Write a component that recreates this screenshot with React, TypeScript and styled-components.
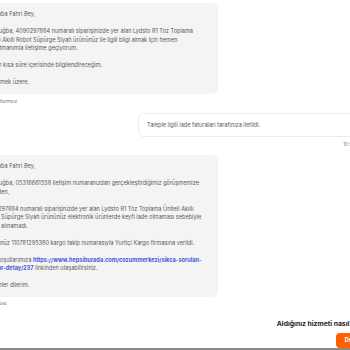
import React from "react";
import styled, { createGlobalStyle } from "styled-components";

const Global = createGlobalStyle`
  html, body { margin: 0; padding: 0; background: #fff; }
  body { width: 350px; height: 350px; overflow: hidden; font-family: Inter, "Noto Sans", sans-serif; }
`;

const Viewport = styled.div`
  width: 350px;
  height: 350px;
  overflow: hidden;
  border-bottom: 2px solid #8a8a8a;
  box-sizing: border-box;
`;

const Thread = styled.div`
  width: 386px;
  margin-left: -26px;
  padding-top: 3px;
  display: flex;
  flex-direction: column;
`;

const AgentBubble = styled.div<{ $mt?: number }>`
  width: 244px;
  box-sizing: border-box;
  margin-top: ${(p) => p.$mt ?? 0}px;
  background: #f4f4f4;
  border-radius: 6px;
  padding: 7px 10px;
  color: #5a5a5a;
  font-size: 5.6px;
  line-height: 8.5px;
`;

const Para = styled.p`
  margin: 0;
  & + & { margin-top: 8.5px; }
`;

const Link = styled.a`
  color: #4b57d8;
  font-weight: 700;
  text-decoration: none;
`;

const Meta = styled.div<{ $mt: number; $right?: boolean; $pl?: number }>`
  margin-top: ${(p) => p.$mt}px;
  font-size: 4.6px;
  line-height: 8px;
  color: #777;
  white-space: nowrap;
  align-self: ${(p) => (p.$right ? "flex-end" : "flex-start")};
  padding-left: ${(p) => (p.$right ? 0 : p.$pl ?? 10)}px;
  padding-right: ${(p) => (p.$right ? 5 : 0)}px;
`;

const UserBubble = styled.div`
  align-self: flex-end;
  margin-top: 7px;
  width: 222px;
  box-sizing: border-box;
  background: #fff;
  border: 1px solid #ececec;
  border-radius: 6px;
  padding: 7px 8px;
  color: #5a5a5a;
  font-size: 5.6px;
  line-height: 8.5px;
`;

const Rating = styled.div`
  align-self: flex-end;
  margin-top: 11px;
  display: flex;
  flex-direction: column;
  align-items: flex-start;
  margin-right: -26px;
`;

const RatingTitle = styled.div`
  font-size: 6.8px;
  line-height: 10px;
  font-weight: 700;
  color: #222;
  white-space: nowrap;
`;

const RateButton = styled.button`
  margin-top: 4px;
  margin-left: 59px;
  height: 15px;
  padding: 0 9px;
  border: none;
  border-radius: 4px;
  background: #ff6000;
  color: #fff;
  font-family: inherit;
  font-size: 5.6px;
  font-weight: 700;
`;

export default function App() {
  return (
    <>
      <Global />
      <Viewport>
        <Thread>
          <AgentBubble>
            <Para>Merhaba Fahri Bey,</Para>
            <Para>
              Ben Tuğba, 4090297884 numaralı siparişinizde yer alan Lydsto R1 Toz Toplama Üniteli Akıllı Robot
              Süpürge Siyah ürününüz ile ilgili bilgi almak için hemen departmanımla iletişime geçiyorum.
            </Para>
            <Para>Sizi en kısa süre içerisinde bilgilendireceğim.</Para>
            <Para>Görüşmek üzere.</Para>
          </AgentBubble>
          <Meta $mt={4}>Tuğba Yazmesi</Meta>
          <UserBubble>Taleple ilgili iade faturaları tarafınıza iletildi.</UserBubble>
          <Meta $mt={4} $right>10:54</Meta>
          <AgentBubble $mt={6}>
            <Para>Merhaba Fahri Bey,</Para>
            <Para>
              Ben Tuğba, 05316661558 iletişim numaranızdan gerçekleştirdiğimiz görüşmemize istinaden,
            </Para>
            <Para>
              4090297884 numaralı siparişinizde yer alan Lydsto R1 Toz Toplama Üniteli Akıllı Robot Süpürge
              Siyah ürününüz elektronik ürünlerde keyfi iade olmaması sebebiyle iadesi alınamadı.
            </Para>
            <Para>Ürününüz 110781295380 kargo takip numarasıyla Yurtiçi Kargo firmasına verildi.</Para>
            <Para>
              İade koşullarımıza{" "}
              <Link href="#">https://www.hepsiburada.com/cozummerkezi/sikca-sorulan-sorular-detay/237</Link>{" "}
              linkinden ulaşabilirsiniz.
            </Para>
            <Para>İyi günler dilerim.</Para>
          </AgentBubble>
          <Meta $mt={3} $pl={13}>Yazmese</Meta>
          <Rating>
            <RatingTitle>Aldığınız hizmeti nasıl buldunuz?</RatingTitle>
            <RateButton>Değerlendir</RateButton>
          </Rating>
        </Thread>
      </Viewport>
    </>
  );
}
